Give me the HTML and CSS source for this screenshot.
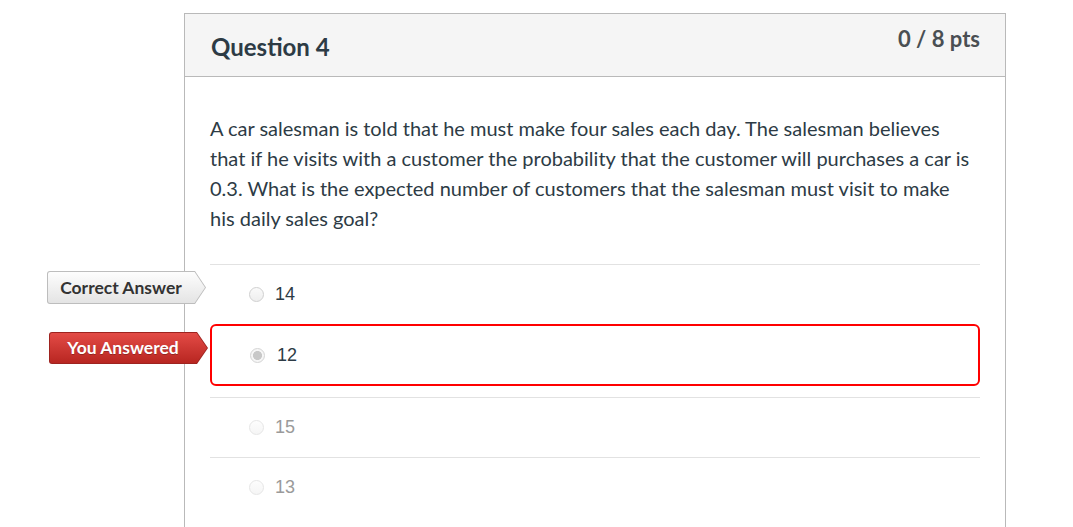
FILE: index.html
```html
<!DOCTYPE html>
<html lang="en">
<head>
<meta charset="utf-8">
<title>Question 4</title>
<link rel="stylesheet" href="styles.css">
</head>
<body>
<div class="page">
  <div class="question">
    <div class="q-header">
      <h2 class="q-title">Question 4</h2>
      <div class="q-points">0 / 8 pts</div>
    </div>
    <div class="q-body">
      <p class="q-text">A car salesman is told that he must make four sales each day. The salesman believes that if he visits with a customer the probability that the customer will purchases a car is 0.3. What is the expected number of customers that the salesman must visit to make his daily sales goal?</p>
      <div class="answers">
        <div class="answer">
          <span class="tag tag-correct"><span class="tag-label">Correct Answer</span></span>
          <span class="radio"></span>
          <span class="answer-text">14</span>
        </div>
        <div class="answer wrong">
          <span class="tag tag-wrong"><span class="tag-label">You Answered</span></span>
          <span class="radio checked"></span>
          <span class="answer-text">12</span>
        </div>
        <div class="answer faded">
          <span class="radio"></span>
          <span class="answer-text">15</span>
        </div>
        <div class="answer faded">
          <span class="radio"></span>
          <span class="answer-text">13</span>
        </div>
      </div>
    </div>
  </div>
</div>
</body>
</html>
```

FILE: styles.css
```css
html, body {
  margin: 0;
  padding: 0;
  background: #fff;
}

body {
  font-family: Lato, "Noto Sans", sans-serif;
  color: #2d3b45;
}

.page {
  padding: 13px 0 0 184px;
}

.question {
  width: 822px;
  box-sizing: border-box;
  border: 1px solid #b9b9b9;
  border-bottom: none;
  min-height: 520px;
}

.q-header {
  display: flex;
  justify-content: space-between;
  align-items: flex-start;
  height: 62px;
  background: #f5f5f5;
  border-bottom: 1px solid #b9b9b9;
  padding: 0 25px 0 26px;
}

.q-title {
  margin: 0;
  padding-top: 19px;
  font-size: 24px;
  line-height: 28px;
  font-weight: 700;
  color: #2d3b45;
}

.q-points {
  padding-top: 13px;
  font-size: 22px;
  line-height: 24px;
  font-weight: 700;
  color: #4a4f53;
}

.q-body {
  padding: 36px 25px 0 25px;
}

.q-text {
  margin: 0 0 31px 0;
  width: 762px;
  font-size: 20px;
  line-height: 30px;
  color: #2d3b45;
}

.answers {
  display: flex;
  flex-direction: column;
}

.answer {
  position: relative;
  display: flex;
  align-items: center;
  gap: 11px;
  height: 60px;
  box-sizing: border-box;
  border-top: 1px solid #e2e2e2;
  padding-left: 39px;
}

.answer.wrong {
  height: 62px;
  border: 2px solid #f00;
  border-radius: 6px;
  padding-left: 38px;
  margin-bottom: 11px;
  gap: 12px;
}

.answer-text {
  font-family: "Liberation Sans", Arial, sans-serif;
  font-size: 18px;
  color: #2d3b45;
}

.answer.faded .answer-text {
  color: #9a9a9a;
}

.radio {
  width: 15px;
  height: 15px;
  box-sizing: border-box;
  border-radius: 50%;
  border: 1px solid #d0d0d0;
  background: linear-gradient(#fafafa, #eeeeee);
  flex: none;
}

.radio.checked {
  border: 1px solid #d4d4d4;
  background: radial-gradient(circle, #c8c8c8 0 4.2px, #f6f6f6 4.8px);
}

.answer.faded .radio {
  border-color: #e6e6e6;
  background: linear-gradient(#fdfdfd, #f5f5f5);
}

.tag {
  position: absolute;
  left: -163px;
  top: 6px;
  width: 159px;
  height: 33px;
  border-radius: 3px 0 0 3px;
  clip-path: polygon(0 0, 148px 0, 100% 50%, 148px 100%, 0 100%);
}

.tag::before {
  content: "";
  position: absolute;
  inset: 1px;
  border-radius: 2px 0 0 2px;
  clip-path: polygon(0 0, calc(100% - 10.4px) 0, 100% 50%, calc(100% - 10.4px) 100%, 0 100%);
}

.tag-label {
  position: relative;
  display: block;
  width: 148px;
  text-align: center;
  font-size: 17.5px;
  font-weight: 700;
  line-height: 33px;
}

.tag-correct {
  background: #bdbdbd;
}

.tag-correct::before {
  background: linear-gradient(#fdfdfd, #e4e4e4);
}

.tag-correct .tag-label {
  color: #333;
}

.tag-wrong {
  top: 6px;
  height: 32px;
  background: #9e231f;
}

.tag-wrong::before {
  background: linear-gradient(#e34b46, #b82621);
}

.tag-wrong .tag-label {
  color: #fff;
  line-height: 32px;
  text-shadow: 0 1px 0 rgba(0, 0, 0, 0.25);
}
```
